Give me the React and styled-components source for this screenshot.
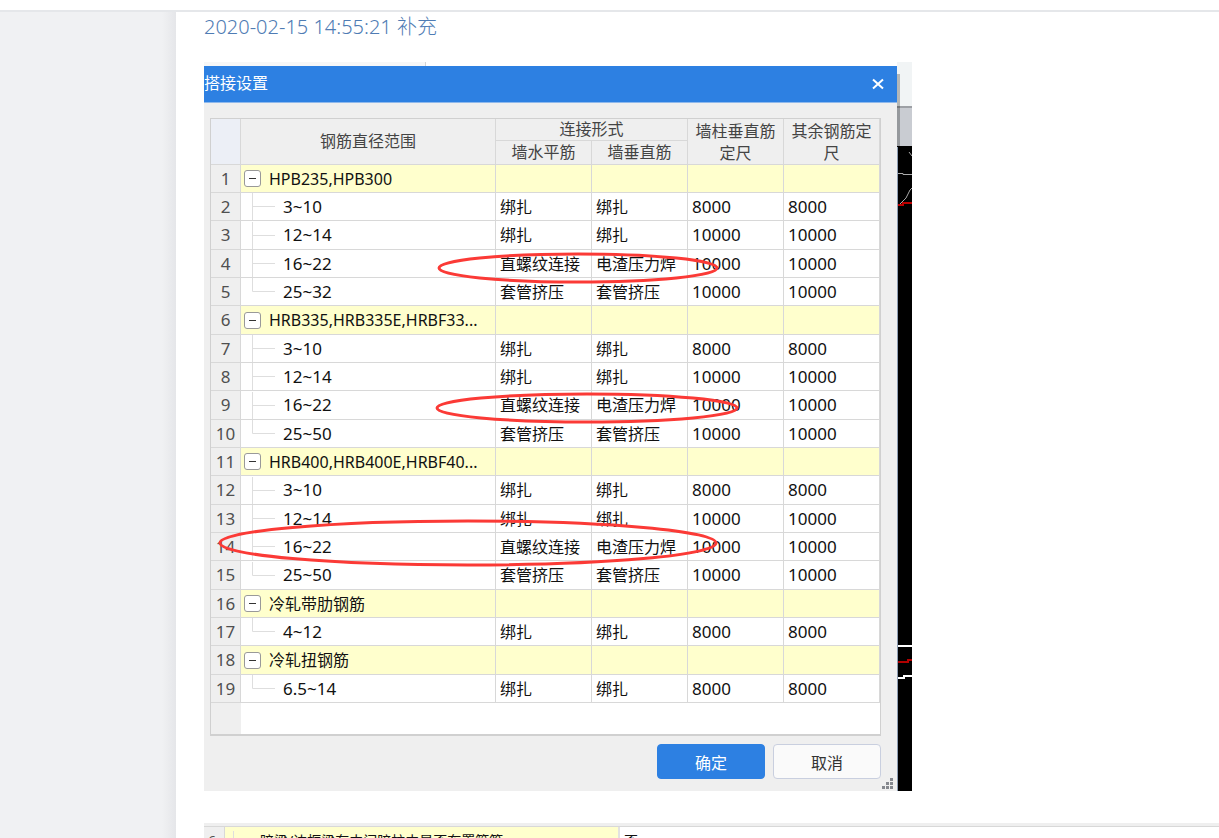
import styled, { createGlobalStyle, css } from 'styled-components';

const GlobalStyle = createGlobalStyle`
  * {
    box-sizing: border-box;
  }

  body {
    margin: 0;
    background: #fff;
    font-family: 'Noto Sans', 'Noto Sans CJK SC', sans-serif;
    font-size: 16px;
    color: #111;
  }
`;

const Page = styled.div`
  display: flex;
  flex-direction: column;
  height: 100vh;
  overflow: hidden;
`;

const TopBar = styled.header`
  flex: none;
  height: 12px;
  border-bottom: 2px solid #e5e7ea;
`;

const Body = styled.div`
  display: flex;
  flex: 1;
  min-height: 0;
`;

const Sidebar = styled.aside`
  flex: none;
  width: 176px;
  background: linear-gradient(to right, #f0f1f3 162px, #e5e6e9);
`;

const Main = styled.main`
  flex: 1;
  min-width: 0;
  padding-left: 28px;
`;

const Stamp = styled.p`
  margin: 0 0 20px;
  font-size: 20px;
  font-weight: 300;
  line-height: 30px;
  color: #4f7cb4;
`;

const Shot = styled.section`
  position: relative;
  display: grid;
  grid-template-columns: minmax(0, 1fr) 15px;
  max-width: 708px;
  margin-bottom: 32px;
`;

const AppEdge = styled.div`
  height: 4px;
  margin-right: auto;
  width: 222px;
  background: #f7f7f7;
  border-right: 1px solid #d4d4d4;
`;

const Dialog = styled.div`
  background: #efefef;
`;

const TitleBar = styled.div`
  display: flex;
  align-items: center;
  justify-content: space-between;
  height: 37px;
  padding-right: 12px;
  background: #2d80e2;
  border-bottom: 1px solid #8fb9ec;
  color: #fff;
`;

const Title = styled.h2`
  margin: 0;
  font-size: 16px;
  font-weight: 400;
  line-height: 34px;
  align-self: flex-start;
`;

const CloseButton = styled.button`
  display: flex;
  padding: 0;
  border: 0;
  background: none;
  color: #fff;
`;

const GridFrame = styled.div`
  height: 618px;
  margin: 15px 16px 8px 6px;
  border: 1px solid #d0d0d0;
  border-bottom-width: 2px;
  background: linear-gradient(to right, #efefef 30px, #fff 30px);
`;

const Grid = styled.table`
  width: 100%;
  table-layout: fixed;
  border-collapse: separate;
  border-spacing: 0;

  th,
  td {
    border: 0 solid #d8d8d8;
    border-width: 0 1px 1px 0;
    font-weight: 400;
  }
`;

const Head = styled.th`
  height: ${(p) => (p.$last ? 24 : 22)}px;
  padding: 0 4px;
  line-height: ${(p) => (p.$wrap ? 22 : 21)}px;
  background: #efefef;
  color: #444;
  text-align: center;
`;

const Corner = styled.td`
  background: #eceff6;
`;

const Row = styled.tr`
  height: 28px;
  background: ${(p) => (p.$group ? '#ffffcd' : '#fff')};

  &:nth-child(3n) {
    height: 29px;
  }
`;

const RowNo = styled.th`
  padding: 0;
  background: #efefef;
  color: #505050;
  font-size: 17px;
  line-height: 22px;
  text-align: center;
`;

const Cell = styled.td`
  padding: 0 4px;
  font-size: ${(p) => (p.$numeric ? 17 : 16)}px;
  line-height: 22px;
  white-space: nowrap;
`;

const NameCell = styled.td`
  padding: 0;
  line-height: 22px;
`;

const NameBox = styled.div`
  display: flex;
  align-items: center;
  height: 27px;
  padding-left: 3px;
`;

const Name = styled.span`
  margin-left: 8px;
  font-size: ${(p) => (p.$group ? 16 : 17)}px;
  white-space: nowrap;
`;

const Toggle = styled.button`
  display: flex;
  align-items: center;
  justify-content: center;
  flex: none;
  width: 17px;
  height: 17px;
  padding: 0;
  border: 1px solid #999;
  border-radius: 3px;
  background: #fff;

  &::before {
    content: '';
    width: 7px;
    height: 1px;
    background: #333;
  }
`;

const Branch = styled.svg`
  flex: none;
  width: 31px;
  height: 27px;
  stroke: #dedede;
  stroke-width: 1;
  fill: none;
`;

const Actions = styled.div`
  display: flex;
  justify-content: flex-end;
  gap: 8px;
  padding: 0 16px 12px;
`;

const Button = styled.button`
  width: 108px;
  height: 35px;
  padding: 0;
  border: 1px solid #c9cfdf;
  border-radius: 4px;
  background: #fafafa;
  color: #333;
  font: inherit;

  ${(p) =>
    p.$primary &&
    css`
      border-color: #2d80e2;
      background: #2d80e2;
      color: #fff;
    `}
`;

const Grip = styled.svg`
  position: absolute;
  right: 19px;
  bottom: 1px;
  width: 12px;
  height: 12px;
  fill: #85888e;
`;

const Backdrop = styled.svg`
  width: 15px;
  height: 100%;
  grid-row: 1 / span 2;
  grid-column: 2;
`;

const Marks = styled.svg`
  position: absolute;
  top: 0;
  left: 0;
  width: 708px;
  height: 729px;
  fill: none;
  stroke: #fb3a36;
  stroke-width: 3;
  pointer-events: none;
`;

const NextShot = styled.table`
  width: 100%;
  table-layout: fixed;
  border-spacing: 0;
  font-size: 14px;
  line-height: 20px;

  thead td {
    height: 4px;
    padding: 0;
    background: #efefef;
    border-bottom: 1px solid #d8d8d8;
  }

  tbody th,
  tbody td {
    height: 28px;
    padding: 4px;
    font-weight: 400;
    text-align: left;
    vertical-align: top;
  }

  tbody th {
    background: #efefef;
    color: #505050;
    border-right: 1px solid #d8d8d8;
  }
`;

const Highlighted = styled.td`
  background: #ffffcd;
  border-right: 2px solid #e2e2e2;
`;

const Indented = styled.div`
  margin-left: 4px;
  padding-left: 26px;
  border-left: 1px solid #dedede;
`;

const TIE = '绑扎';
const THREAD = '直螺纹连接';
const WELD = '电渣压力焊';
const SLEEVE = '套管挤压';

const rows = [
  { name: 'HPB235,HPB300', group: true },
  { name: '3~10', cells: [TIE, TIE, 8000, 8000] },
  { name: '12~14', cells: [TIE, TIE, 10000, 10000] },
  { name: '16~22', cells: [THREAD, WELD, 10000, 10000] },
  { name: '25~32', cells: [SLEEVE, SLEEVE, 10000, 10000], last: true },
  { name: 'HRB335,HRB335E,HRBF33...', group: true },
  { name: '3~10', cells: [TIE, TIE, 8000, 8000] },
  { name: '12~14', cells: [TIE, TIE, 10000, 10000] },
  { name: '16~22', cells: [THREAD, WELD, 10000, 10000] },
  { name: '25~50', cells: [SLEEVE, SLEEVE, 10000, 10000], last: true },
  { name: 'HRB400,HRB400E,HRBF40...', group: true },
  { name: '3~10', cells: [TIE, TIE, 8000, 8000] },
  { name: '12~14', cells: [TIE, TIE, 10000, 10000] },
  { name: '16~22', cells: [THREAD, WELD, 10000, 10000] },
  { name: '25~50', cells: [SLEEVE, SLEEVE, 10000, 10000], last: true },
  { name: '冷轧带肋钢筋', group: true },
  { name: '4~12', cells: [TIE, TIE, 8000, 8000], last: true },
  { name: '冷轧扭钢筋', group: true },
  { name: '6.5~14', cells: [TIE, TIE, 8000, 8000], last: true },
];

const IndexCol = styled.col`
  width: 30px;
`;

const ValueCol = styled.col`
  width: 96px;
`;

const LapGrid = () => (
  <Grid>
    <colgroup>
      <IndexCol />
      <col />
      <ValueCol />
      <ValueCol />
      <ValueCol />
      <ValueCol />
    </colgroup>
    <thead>
      <tr>
        <Corner rowSpan={2} />
        <Head rowSpan={2}>钢筋直径范围</Head>
        <Head colSpan={2}>连接形式</Head>
        <Head rowSpan={2} $wrap>墙柱垂直筋定尺</Head>
        <Head rowSpan={2} $wrap>其余钢筋定尺</Head>
      </tr>
      <tr>
        <Head $last>墙水平筋</Head>
        <Head $last>墙垂直筋</Head>
      </tr>
    </thead>
    <tbody>
      {rows.map((row, i) => (
        <Row key={i} $group={row.group}>
          <RowNo scope="row">{i + 1}</RowNo>
          <NameCell>
            <NameBox>
              {row.group ? (
                <Toggle aria-label={`收起 ${row.name}`} />
              ) : (
                <Branch aria-hidden="true">
                  <path d={row.last ? 'M8.5 0V13.5H31' : 'M8.5 0V27M8.5 13.5H31'} />
                </Branch>
              )}
              <Name $group={row.group}>{row.name}</Name>
            </NameBox>
          </NameCell>
          {(row.cells || ['', '', '', '']).map((value, j) => (
            <Cell key={j} $numeric={j > 1}>{value}</Cell>
          ))}
        </Row>
      ))}
    </tbody>
  </Grid>
);

// strip of the drawing window that shows behind the dialog
const DrawingStrip = () => (
  <Backdrop viewBox="0 0 15 729" preserveAspectRatio="none" aria-hidden="true">
    <rect width="15" height="45" fill="#f1f4f5" />
    <rect y="44" width="15" height="2" fill="#9da0a5" />
    <rect y="46" width="15" height="39" fill="#c9ccd2" />
    <rect y="84" width="15" height="645" fill="#000" />
    <rect y="12" width="3" height="73" fill="#000" opacity="0.25" />
    <path d="M0 111.500H6V112.500H15M0 145L9 136L13 128L15 126M12 90L15 94" stroke="#aaa" fill="none" />
    <path d="M0 143H6V141H15" stroke="#b00" strokeWidth="2" fill="none" />
    <path d="M0 584H15M0 616H7V614H15" stroke="#fff" strokeWidth="2" fill="none" />
    <path d="M0 600H11V598H15" stroke="#b00000" strokeWidth="2" fill="none" />
    <rect y="85" width="1" height="644" fill="#8d9db3" />
  </Backdrop>
);

const NumberCol = styled.col`
  width: 21px;
`;

const LabelCol = styled.col`
  width: 395px;
`;

const App = () => (
  <>
    <GlobalStyle />
    <Page>
      <TopBar />
      <Body>
        <Sidebar />
        <Main>
          <Stamp>2020-02-15 14:55:21 补充</Stamp>
          <Shot>
            <AppEdge />
            <DrawingStrip />
            <Dialog>
              <TitleBar>
                <Title>搭接设置</Title>
                <CloseButton aria-label="关闭">
                  <svg width="14" height="14" viewBox="0 0 14 14" stroke="currentColor" strokeWidth="2">
                    <path d="M2 2.500L12 11.500M12 2.500L2 11.500" />
                  </svg>
                </CloseButton>
              </TitleBar>
              <GridFrame>
                <LapGrid />
              </GridFrame>
              <Actions>
                <Button $primary>确定</Button>
                <Button>取消</Button>
              </Actions>
            </Dialog>
            <Grip viewBox="0 0 12 12" aria-hidden="true">
              <path d="M9 0h3v3h-3zM9 4h3v3h-3zM9 8h3v3h-3zM5 4h3v3h-3zM5 8h3v3h-3zM1 8h3v3h-3z" />
            </Grip>
            <Marks aria-hidden="true">
              <ellipse cx="374" cy="206" rx="139" ry="14" />
              <ellipse cx="383" cy="346" rx="150" ry="14" />
              <ellipse cx="264" cy="481" rx="248" ry="22" />
            </Marks>
          </Shot>
          <NextShot>
            <colgroup>
              <NumberCol />
              <LabelCol />
              <col />
            </colgroup>
            <thead>
              <tr>
                <td />
                <td />
                <td />
              </tr>
            </thead>
            <tbody>
              <tr>
                <th scope="row">6</th>
                <Highlighted>
                  <Indented>暗梁/边框梁在中间暗柱中是否布置箍筋</Indented>
                </Highlighted>
                <td>否</td>
              </tr>
            </tbody>
          </NextShot>
        </Main>
      </Body>
    </Page>
  </>
);

export default App;
